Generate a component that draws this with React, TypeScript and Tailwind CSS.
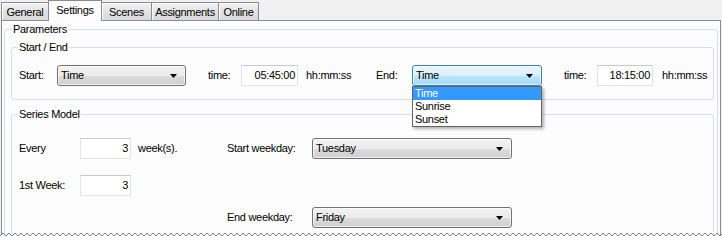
import clsx from 'clsx';

const tabs = [
  { label: 'General', w: 'w-[48px]' },
  { label: 'Settings', w: 'w-[54px]', active: true },
  { label: 'Scenes', w: 'w-[51px]' },
  { label: 'Assignments', w: 'w-[68px]' },
  { label: 'Online', w: 'w-[41px]' },
];

function Arrow() {
  return (
    <svg width="7" height="4" viewBox="0 0 7 4" className="shrink-0">
      <path d="M0 0h7L3.5 4z" fill="#000" />
    </svg>
  );
}

// win7 style combo box
function Combo({ value, className, focused }: { value: string; className: string; focused?: boolean }) {
  return (
    <div
      className={clsx(
        'flex h-[21px] items-center justify-between rounded-[3px] border pl-[3px] pr-[8px] shadow-[inset_0_0_0_1px_rgba(255,255,255,0.7)]',
        focused
          ? 'border-[#3c7fb1] bg-[linear-gradient(#eaf6fd_0%,#d9f0fc_50%,#bee6fd_50%,#a7d9f5_100%)]'
          : 'border-[#707070] bg-[linear-gradient(#f2f2f2_0%,#ebebeb_50%,#dddddd_50%,#cfcfcf_100%)]',
        className
      )}
    >
      <span>{value}</span>
      <Arrow />
    </div>
  );
}

function TextBox({ value, className }: { value: string; className: string }) {
  return (
    <div
      className={clsx(
        'flex h-[21px] items-center justify-end border border-[#e0e4e9] border-t-[#c6cad0] bg-white pr-[2px]',
        className
      )}
    >
      {value}
    </div>
  );
}

function Zigzag() {
  let pts = '';
  for (let i = 0; i <= 122; i++) {
    pts += `${i * 6},${4} ${i * 6 + 3},${1} `;
  }
  return (
    <svg width="722" height="8" viewBox="0 0 722 8" className="absolute bottom-0 left-0">
      <polygon points={`0,8 ${pts} 740,8`} fill="#fff" />
      <polyline points={pts} fill="none" stroke="#7a7a7a" strokeWidth="1" />
    </svg>
  );
}

export default function App() {
  return (
    <div className="relative h-[240px] w-[722px] overflow-hidden bg-[#f0f0f0] pl-[1px] font-['Liberation_Sans',Arial,sans-serif] text-[11px] leading-[13px] tracking-[-0.3px] text-black">
      {/* tab strip */}
      <div className="flex h-[20px] items-end pl-[1px]">
        {tabs.map((t) =>
          t.active ? (
            <div
              key={t.label}
              className={clsx(
                'relative z-10 -ml-px mb-[-1px] flex h-[21px] items-start justify-center border border-b-0 border-[#898c95] bg-[#fcfcfc] pt-[3px]',
                t.w
              )}
            >
              {t.label}
            </div>
          ) : (
            <div
              key={t.label}
              className={clsx(
                '-ml-px flex h-[18px] items-center justify-center border border-b-0 border-[#898c95] bg-[linear-gradient(#f2f2f2,#e3e3e3_50%,#d9d9d9)] pt-[1px] shadow-[inset_1px_1px_0_#fff]',
                t.w
              )}
            >
              {t.label}
            </div>
          )
        )}
      </div>

      {/* tab page */}
      <div className="h-[220px] w-[720px] border border-[#898c95] bg-[#fcfcfc] pl-[2px] pt-[2px]">
        <fieldset className="w-[714px] rounded-[3px] border border-[#d5dfe5] pb-[40px]">
          <legend className="ml-[7px] px-[1px]">Parameters</legend>

          <fieldset className="ml-[6px] mt-[5px] w-[703px] rounded-[3px] border border-[#d5dfe5] pb-[13px]">
            <legend className="ml-[6px] px-[1px]">Start / End</legend>
            <div className="mt-[11px] flex items-center pl-[7px]">
              <span className="w-[38px]">Start:</span>
              <Combo value="Time" className="w-[129px]" />
              <span className="ml-[22px] w-[33px]">time:</span>
              <TextBox value="05:45:00" className="w-[57px]" />
              <span className="ml-[8px] w-[70px]">hh:mm:ss</span>
              <span className="w-[36px]">End:</span>
              <div className="relative">
                <Combo value="Time" className="w-[130px]" focused />
                <div className="absolute left-0 top-full z-20 w-[130px] border border-[#646464] bg-white shadow-[2px_2px_3px_rgba(0,0,0,0.3)]">
                  <div className="bg-[#3399ff] pl-[2px] text-white">Time</div>
                  <div className="pl-[2px]">Sunrise</div>
                  <div className="pl-[2px]">Sunset</div>
                </div>
              </div>
              <span className="ml-[22px] w-[33px]">time:</span>
              <TextBox value="18:15:00" className="w-[56px]" />
              <span className="ml-[9px]">hh:mm:ss</span>
            </div>
          </fieldset>

          <fieldset className="ml-[6px] mt-[8px] w-[703px] rounded-[3px] border border-[#d5dfe5] pb-[20px]">
            <legend className="ml-[6px] px-[1px]">Series Model</legend>
            <div className="mt-[17px] flex items-center pl-[7px]">
              <span className="w-[61px]">Every</span>
              <TextBox value="3" className="w-[51px]" />
              <span className="ml-[7px] w-[89px]">week(s).</span>
              <span className="w-[85px]">Start weekday:</span>
              <Combo value="Tuesday" className="w-[200px]" />
            </div>
            <div className="mt-[16px] flex items-center pl-[7px]">
              <span className="w-[61px]">1st Week:</span>
              <TextBox value="3" className="w-[51px]" />
            </div>
            <div className="mt-[11px] flex items-center pl-[215px]">
              <span className="w-[85px]">End weekday:</span>
              <Combo value="Friday" className="w-[200px]" />
            </div>
          </fieldset>
        </fieldset>
      </div>

      <Zigzag />
    </div>
  );
}
